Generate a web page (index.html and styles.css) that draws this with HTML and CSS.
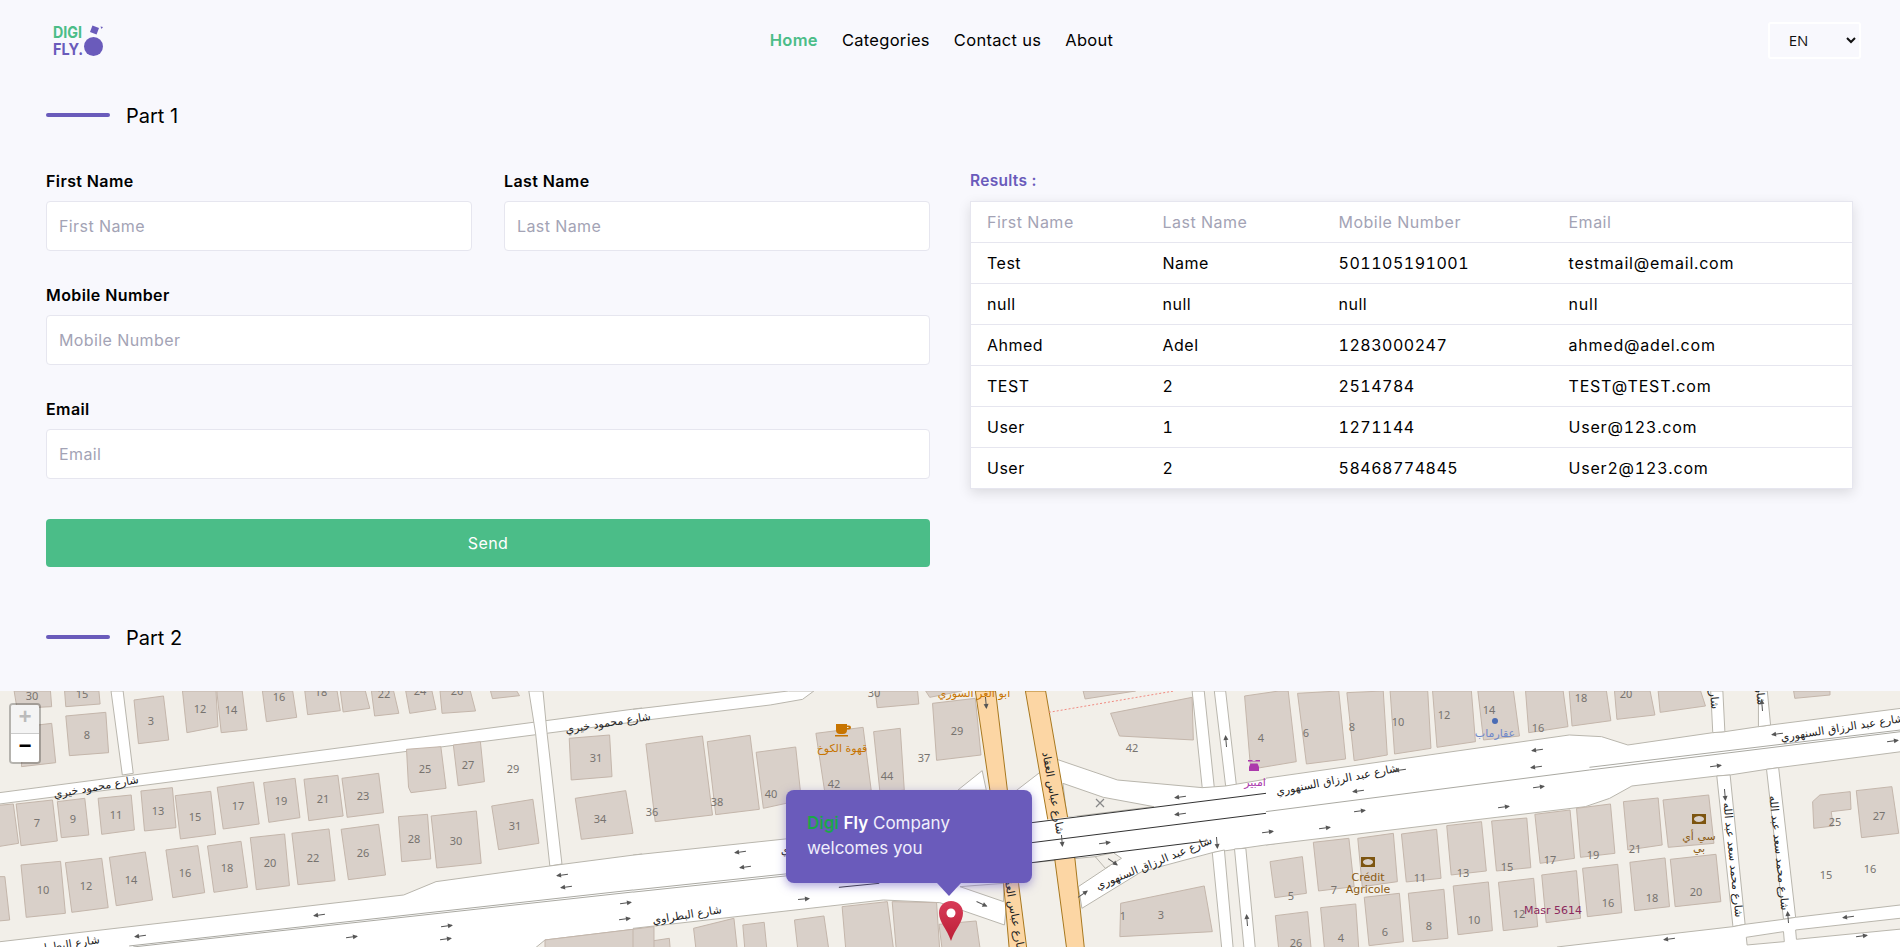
FILE: index.html
```html
<!DOCTYPE html>
<html lang="en">

<head>
    <meta charset="UTF-8">
    <meta name="viewport" content="width=device-width, initial-scale=1.0">
    <title>Digi Fly</title>
    <link rel="stylesheet" href="styles.css">
</head>

<body>
    <header class="site-header">
        <svg class="logo" width="50" height="32" viewBox="0 0 50 32">
            <text class="logo-digi" x="0" y="13" textLength="29" lengthAdjust="spacingAndGlyphs">DIGI</text>
            <text class="logo-fly" x="0" y="30" textLength="30" lengthAdjust="spacingAndGlyphs">FLY.</text>
            <circle cx="40.5" cy="21.5" r="9.5" fill="#6a5bbb" />
            <rect x="38" y="1.500" width="7" height="7" fill="#6a5bbb" transform="rotate(20 41.500 5)" />
            <path d="M47.500 1.500l2.500 .5-1.500 2z" fill="#6a5bbb" />
        </svg>
        <nav class="main-nav">
            <a class="active" href="#">Home</a>
            <a href="#">Categories</a>
            <a href="#">Contact us</a>
            <a href="#">About</a>
        </nav>
        <select class="lang-select">
            <option>EN</option>
            <option>AR</option>
        </select>
    </header>

    <main class="content">
        <h2 class="part-title"><span>Part 1</span></h2>
        <div class="part-one">
            <form class="contact-form">
                <div class="form-row">
                    <div class="field">
                        <label>First Name</label>
                        <input type="text" placeholder="First Name">
                    </div>
                    <div class="field">
                        <label>Last Name</label>
                        <input type="text" placeholder="Last Name">
                    </div>
                </div>
                <div class="field">
                    <label>Mobile Number</label>
                    <input type="text" placeholder="Mobile Number">
                </div>
                <div class="field">
                    <label>Email</label>
                    <input type="text" placeholder="Email">
                </div>
                <button type="button" class="send-btn">Send</button>
            </form>
            <div class="results">
                <div class="results-title">Results :</div>
                <table class="results-table">
                    <thead>
                        <tr>
                            <th>First Name</th>
                            <th>Last Name</th>
                            <th>Mobile Number</th>
                            <th>Email</th>
                        </tr>
                    </thead>
                    <tbody>
                        <tr><td>Test</td><td>Name</td><td>501105191001</td><td>testmail@email.com</td></tr>
                        <tr><td>null</td><td>null</td><td>null</td><td>null</td></tr>
                        <tr><td>Ahmed</td><td>Adel</td><td>1283000247</td><td>ahmed@adel.com</td></tr>
                        <tr><td>TEST</td><td>2</td><td>2514784</td><td>TEST@TEST.com</td></tr>
                        <tr><td>User</td><td>1</td><td>1271144</td><td>User@123.com</td></tr>
                        <tr><td>User</td><td>2</td><td>58468774845</td><td>User2@123.com</td></tr>
                    </tbody>
                </table>
            </div>
        </div>
        <h2 class="part-title part-two"><span>Part 2</span></h2>
    </main>

    <section class="map">
        <svg class="map-canvas" width="1900" height="257" viewBox="0 0 1900 257">
            <defs>
                <g id="arrow">
                    <path d="M-6 0H5" stroke="#555" stroke-width="1" fill="none" />
                    <path d="M6 0L1-2.5V2.5z" fill="#555" />
                </g>
                <clipPath id="clip-right-of-origin">
                    <rect x="0" y="0" width="3000" height="1000" />
                </clipPath>
            </defs>

            <!-- left part -->
            <g transform="translate(0,-10) scale(.4037,.3333)">
                <polygon class="road" points="-20,341 1590,84 1590,123 -20,375" />
                <polygon class="road" points="275,33 305,33 330,280 303,285" />
                <polygon class="road" points="1310,33 1345,33 1355,158 1392,552 1362,558 1327,163" />
                <polygon class="road" points="-20,788 1000,645 1080,605 1362,558 1590,522 1590,745 1350,780 1280,850 -20,850" />
                <polyline class="line" points="320,798 1590,627" />
                <polyline class="line" points="330,801 1590,633" />
                <g class="bldgs">
                    <polygon points="35,33 125,33 128,80 42,85" />
                    <polygon points="160,33 245,33 248,72 163,80" />
                    <polygon points="60,140 128,130 138,248 53,260" />
                    <polygon points="163,108 262,97 269,218 172,227" />
                    <polygon points="332,60 405,48 418,180 343,191" />
                    <polygon points="452,33 535,33 540,140 463,158" />
                    <polygon points="537,33 600,33 612,150 548,158" />
                    <polygon points="650,33 725,33 735,112 660,125" />
                    <polygon points="755,33 835,33 843,92 762,104" />
                    <polygon points="843,33 905,33 916,85 850,96" />
                    <polygon points="920,33 975,33 988,100 928,108" />
                    <polygon points="1005,33 1070,33 1080,88 1015,100" />
                    <polygon points="1090,33 1165,33 1178,93 1095,100" />
                    <polygon points="1215,33 1280,33 1287,47 1220,56" />
                    <polygon points="1007,208 1092,200 1105,325 1018,338 1012,322" />
                    <polygon points="1123,195 1190,185 1200,305 1135,317" />
                    <polygon points="1410,175 1510,165 1516,290 1415,300" />
                    <polygon points="1425,355 1550,332 1568,460 1440,478" />
                    <polygon points="-20,378 33,372 46,490 -20,503" />
                    <polygon points="40,372 130,360 142,483 52,497" />
                    <polygon points="142,365 210,355 220,465 152,473" />
                    <polygon points="243,355 325,345 333,450 252,463" />
                    <polygon points="349,333 427,323 436,443 358,453" />
                    <polygon points="434,347 522,334 534,463 447,477" />
                    <polygon points="538,322 628,306 642,432 553,447" />
                    <polygon points="653,308 731,295 743,413 666,427" />
                    <polygon points="753,298 837,286 850,408 765,422" />
                    <polygon points="847,295 938,280 950,398 860,412" />
                    <polygon points="987,410 1059,403 1067,537 995,545" />
                    <polygon points="1068,408 1180,393 1192,550 1082,564" />
                    <polygon points="1218,378 1320,358 1335,490 1235,509" />
                    <polygon points="52,555 150,544 162,700 65,712" />
                    <polygon points="162,548 252,535 268,683 178,697" />
                    <polygon points="271,532 360,516 378,660 288,677" />
                    <polygon points="411,510 490,497 507,638 428,653" />
                    <polygon points="514,498 597,484 613,622 530,637" />
                    <polygon points="620,473 705,462 717,617 635,629" />
                    <polygon points="723,460 815,447 830,602 738,614" />
                    <polygon points="845,448 938,433 955,585 863,599" />
                    <polygon points="-20,590 12,590 24,720 -20,725" />
                </g>
            </g>

            <!-- middle part -->
            <g transform="translate(633,-10) scale(.4037,.3333)" clip-path="url(#clip-right-of-origin)">
                <polygon class="road" points="-20,91 385,33 448,33 420,58 340,75 -20,128" />
                <polygon class="road" points="1385,33 1415,33 1440,323 1410,323" />
                <polygon class="road" points="1440,33 1468,33 1495,320 1468,318" />
                <polygon class="road" points="805,330 865,272 875,330" />
                <polygon class="road" points="-20,528 860,415 1050,238 1200,300 1410,323 1468,318 1590,293 1590,491 1435,518 1260,575 1112,685 1103,620 1180,558 1145,530 988,548 935,560 920,735 760,668 620,660 -20,748" />
                <polygon class="road" points="1435,518 1465,510 1490,850 1462,850" />
                <polygon class="road" points="1490,507 1518,505 1545,850 1517,850" />
                <polygon class="land" points="1065,310 1165,352 1290,380 1075,412" />
                <polygon class="land" points="810,620 918,665 918,610" />
                <polygon class="land" points="1145,530 1170,565 1210,535 1190,518" />
                <polygon class="motorway" points="848,33 898,33 955,610 980,850 935,850 918,610" />
                <polygon class="motorway" points="972,33 1022,33 1095,540 1122,850 1079,850 1045,540" />
                <polygon class="bridge" points="860,443 1100,408 1100,530 860,568" />
                <polyline class="line dark" points="988,428 1568,340" />
                <polyline class="line dark" points="988,488 1568,400" />
                <polyline class="line dark" points="988,548 1420,483" />
                <polyline class="line dark" points="510,622 610,610" />
                <polyline class="line" points="-20,633 860,520" />
                <polyline class="line" points="-20,639 860,526" />
                <polyline class="dotted" points="1030,97 1340,33" />
                <g class="bldgs">
                    <polygon points="600,33 705,33 708,72 605,83" />
                    <polygon points="725,33 815,33 735,52" />
                    <polygon points="742,70 848,55 862,225 752,241" />
                    <polygon points="32,192 172,168 197,405 55,425" />
                    <polygon points="184,185 290,166 313,388 205,404" />
                    <polygon points="305,217 403,201 417,360 323,385" />
                    <polygon points="453,160 570,142 590,330 478,360" />
                    <polygon points="596,155 662,145 672,330 612,340" />
                    <polygon points="1183,100 1385,52 1388,180 1205,168" />
                    <polygon points="1115,33 1245,33 1120,57" />
                    <polygon points="1515,48 1600,33 1623,33 1643,245 1530,268" />
                    <polygon points="400,720 473,708 490,850 412,850" />
                    <polygon points="150,745 250,715 262,850 160,850" />
                    <polygon points="272,735 325,727 335,850 280,850" />
                    <polygon points="518,680 630,665 650,850 530,850" />
                    <polygon points="642,665 752,668 762,850 655,850" />
                    <polygon points="758,733 850,723 865,850 770,850" />
                    <polygon points="25,787 90,775 95,850 28,850" />
                    <polygon points="0,750 14,748 16,850 0,850" />
                    <polygon points="-218,780 52,740 52,850 -218,850" />
                    <polygon points="1208,670 1415,618 1435,755 1206,770" />
                </g>
            </g>
            <g transform="translate(633,-10) scale(.4037,.3333)">
                <polygon class="bldg-solo" points="-218,780 0,748 0,850 -218,850" />
            </g>

            <!-- right part -->
            <g transform="translate(1266,-10) scale(.4043,.3333)" clip-path="url(#clip-right-of-origin)">
                <polygon class="road" points="-20,298 750,165 830,170 895,195 1105,158 1135,155 1218,140 1248,135 1590,82 1590,212 1268,263 1238,268 1148,285 1115,288 905,318 850,355 790,380 -20,498" />
                <polygon class="road" points="1100,33 1130,33 1135,155 1105,158" />
                <polygon class="road" points="1218,33 1240,33 1248,135 1218,140" />
                <polygon class="road" points="1115,288 1148,285 1185,733 1155,740" />
                <polygon class="road" points="1238,268 1268,263 1310,712 1280,718" />
                <polygon class="road" points="720,801 1155,740 1185,733 1280,718 1310,712 1590,672 1590,850 720,850" />
                <polygon class="land" points="1188,772 1280,755 1282,785 1190,795" />
                <polygon class="land" points="1310,750 1590,712 1590,745 1312,778" />
                <polyline class="line" points="-20,398 800,270 1590,152" />
                <polyline class="line" points="800,262 1590,147" />
                <g class="bldgs">
                    <polygon points="78,40 180,33 197,237 100,252" />
                    <polygon points="200,38 290,33 300,225 218,242" />
                    <polygon points="307,33 400,33 408,205 318,222" />
                    <polygon points="412,33 508,33 518,185 423,202" />
                    <polygon points="524,33 612,33 627,168 538,180" />
                    <polygon points="642,33 735,33 747,140 650,158" />
                    <polygon points="750,33 842,33 853,122 757,138" />
                    <polygon points="862,33 950,33 962,105 868,118" />
                    <polygon points="970,33 1075,33 1087,78 975,97" />
                    <polygon points="1305,33 1395,33 1395,45 1308,55" />
                    <polygon points="10,545 90,530 100,640 22,653" />
                    <polygon points="117,487 205,475 218,620 130,633" />
                    <polygon points="227,475 315,460 325,605 238,620" />
                    <polygon points="335,462 422,448 433,595 347,606" />
                    <polygon points="447,437 533,425 545,573 458,585" />
                    <polygon points="558,423 645,414 655,563 570,573" />
                    <polygon points="665,403 752,390 763,535 678,550" />
                    <polygon points="768,385 852,372 863,520 778,532" />
                    <polygon points="884,365 970,354 980,495 895,510" />
                    <polygon points="982,360 1095,345 1108,490 995,502" />
                    <polygon points="23,707 103,695 115,850 35,850" />
                    <polygon points="135,683 222,672 232,850 148,850" />
                    <polygon points="243,652 330,640 340,785 255,797" />
                    <polygon points="352,640 440,628 450,775 363,785" />
                    <polygon points="463,618 550,606 560,752 475,764" />
                    <polygon points="575,607 662,595 672,740 587,752" />
                    <polygon points="682,585 768,572 778,715 693,728" />
                    <polygon points="783,565 870,553 880,698 795,710" />
                    <polygon points="900,547 987,534 998,680 912,692" />
                    <polygon points="1000,538 1113,523 1125,665 1012,680" />
                    <polygon points="1352,365 1370,345 1445,335 1447,388 1398,395 1403,438 1355,445" />
                    <polygon points="1460,332 1548,320 1565,460 1473,473" />
                </g>
            </g>

            <!-- everything below is placed one pixel lower because the canvas starts 1px above the map -->
            <g transform="translate(0,1)">
                <!-- house numbers -->
                <g class="num">
                    <text x="32" y="4">30</text><text x="82" y="2">15</text><text x="87" y="43">8</text><text x="151" y="29">3</text>
                    <text x="200" y="17">12</text><text x="231" y="18">14</text><text x="279" y="5">16</text><text x="321" y="0">18</text>
                    <text x="384" y="2">22</text><text x="420" y="-1">24</text><text x="457" y="-1">26</text><text x="425" y="77">25</text>
                    <text x="468" y="73">27</text><text x="513" y="77">29</text><text x="596" y="66">31</text><text x="37" y="131">7</text>
                    <text x="73" y="127">9</text><text x="116" y="123">11</text><text x="158" y="119">13</text><text x="195" y="125">15</text>
                    <text x="238" y="114">17</text><text x="281" y="109">19</text><text x="323" y="107">21</text><text x="363" y="104">23</text>
                    <text x="414" y="147">28</text><text x="456" y="149">30</text><text x="515" y="134">31</text><text x="600" y="127">34</text>
                    <text x="43" y="198">10</text><text x="86" y="194">12</text><text x="131" y="188">14</text><text x="185" y="181">16</text>
                    <text x="227" y="176">18</text><text x="270" y="171">20</text><text x="313" y="166">22</text><text x="363" y="161">26</text>
                    <text x="957" y="39">29</text><text x="924" y="66">37</text><text x="1132" y="56">42</text><text x="1261" y="46">4</text>
                    <text x="652" y="120">36</text><text x="717" y="110">38</text><text x="771" y="102">40</text><text x="834" y="92">42</text>
                    <text x="887" y="84">44</text><text x="1123" y="224">1</text><text x="1161" y="223">3</text><text x="874" y="1">30</text>
                    <text x="1489" y="18">14</text><text x="1306" y="41">6</text><text x="1352" y="35">8</text><text x="1398" y="30">10</text>
                    <text x="1444" y="23">12</text><text x="1538" y="36">16</text><text x="1581" y="6">18</text><text x="1626" y="2">20</text>
                    <text x="1291" y="204">5</text><text x="1334" y="198">7</text><text x="1420" y="186">11</text><text x="1463" y="181">13</text>
                    <text x="1507" y="175">15</text><text x="1550" y="168">17</text><text x="1593" y="163">19</text><text x="1635" y="157">21</text>
                    <text x="1296" y="251">26</text><text x="1341" y="246">4</text><text x="1385" y="240">6</text><text x="1429" y="234">8</text>
                    <text x="1474" y="228">10</text><text x="1519" y="222">12</text><text x="1608" y="211">16</text><text x="1652" y="206">18</text>
                    <text x="1696" y="200">20</text><text x="1835" y="130">25</text><text x="1879" y="124">27</text><text x="1826" y="183">15</text>
                    <text x="1870" y="177">16</text>
                </g>

                <!-- street names -->
                <g class="street">
                    <text transform="translate(96,96) rotate(-10)">شارع محمود خيري</text>
                    <text transform="translate(608,32) rotate(-9)">شارع محمود خيري</text>
                    <text transform="translate(65,254) rotate(-9)">شارع البطراوي</text>
                    <text transform="translate(815,155) rotate(-8)">شارع البطراوي</text>
                    <text transform="translate(687,224) rotate(-9)">شارع البطراوي</text>
                    <text transform="translate(1053,102) rotate(80)">شارع عباس العقاد</text>
                    <text transform="translate(1014,222) rotate(80)">شارع عباس العقاد</text>
                    <text transform="translate(1154,172) rotate(-22)">شارع عبد الرزاق السنهوري</text>
                    <text transform="translate(1337,89) rotate(-11)">شارع عبد الرزاق السنهوري</text>
                    <text transform="translate(1842,37) rotate(-9)">شارع عبد الرزاق السنهوري</text>
                    <text transform="translate(1733,169) rotate(84)">شارع محمد سعد عبد الله</text>
                    <text transform="translate(1779,162) rotate(84)">شارع محمد سعد عبد الله</text>
                    <text transform="translate(1714,6) rotate(84)">شارع</text>
                    <text transform="translate(1760,2) rotate(84)">شارع</text>
                </g>

                <!-- places -->
                <text class="poi cafe" x="974" y="2">ابو الغر السوري</text>
                <text class="poi cafe" x="842" y="57">قهوة الكوخ</text>
                <text class="poi car" x="1255" y="91">امبير</text>
                <text class="poi estate" x="1495" y="42">عقارماب</text>
                <text class="poi bank" x="1368" y="186">Crédit</text>
                <text class="poi bank" x="1368" y="198">Agricole</text>
                <text class="poi bank" x="1699" y="145">سي أي</text>
                <text class="poi bank" x="1699" y="157">بي</text>
                <text class="poi masr" x="1553" y="219">Masr 5614</text>

                <circle cx="1495" cy="30" r="3" fill="#4a6cb5" />
                <path d="M836 33h11v6a4 4 0 0 1-4 4h-3a4 4 0 0 1-4-4zM847 34.500h2a1.500 1.500 0 0 1 0 4h-2v-1.500h1.500v-1h-1.500zM835 44h13v1.500h-13z" fill="#c77400" />
                <path d="M1248 69h4l1 1h2l1-1h4v1.500h-12zM1249 76l1.500-3.500h7l1.500 3.500v4h-10z" fill="#ac39ac" />
                <g fill="#7d5510">
                    <path d="M1361 166h14v10h-14zM1368 168a5 3 0 1 0 .01 0z" fill-rule="evenodd" />
                    <path d="M1692 123h14v10h-14zM1699 125a5 3 0 1 0 .01 0z" fill-rule="evenodd" />
                </g>
                <path d="M1096 108l8 8M1104 108l-8 8" stroke="#888" stroke-width="1.200" />

                <!-- one way arrows -->
                <use href="#arrow" transform="translate(562,184) rotate(172)" />
                <use href="#arrow" transform="translate(566,196) rotate(172)" />
                <use href="#arrow" transform="translate(319,224) rotate(172)" />
                <use href="#arrow" transform="translate(140,245) rotate(172)" />
                <use href="#arrow" transform="translate(447,235) rotate(-8)" />
                <use href="#arrow" transform="translate(446,248) rotate(-8)" />
                <use href="#arrow" transform="translate(352,246) rotate(-8)" />
                <use href="#arrow" transform="translate(626,212) rotate(-8)" />
                <use href="#arrow" transform="translate(625,228) rotate(-8)" />
                <use href="#arrow" transform="translate(740,161) rotate(172)" />
                <use href="#arrow" transform="translate(745,176) rotate(172)" />
                <use href="#arrow" transform="translate(1180,106) rotate(172)" />
                <use href="#arrow" transform="translate(1180,123) rotate(172)" />
                <use href="#arrow" transform="translate(804,208) rotate(-5)" />
                <use href="#arrow" transform="translate(982,213) rotate(25)" />
                <use href="#arrow" transform="translate(1105,152) rotate(-8)" />
                <use href="#arrow" transform="translate(1113,171) rotate(35)" />
                <use href="#arrow" transform="translate(1083,203) rotate(-35)" />
                <use href="#arrow" transform="translate(986,12) rotate(85)" />
                <use href="#arrow" transform="translate(1062,150) rotate(85)" />
                <use href="#arrow" transform="translate(1226,50) rotate(-95)" />
                <use href="#arrow" transform="translate(1217,152) rotate(85)" />
                <use href="#arrow" transform="translate(1247,229) rotate(-95)" />
                <use href="#arrow" transform="translate(1537,59) rotate(172)" />
                <use href="#arrow" transform="translate(1536,76) rotate(172)" />
                <use href="#arrow" transform="translate(1400,79) rotate(172)" />
                <use href="#arrow" transform="translate(1358,100) rotate(172)" />
                <use href="#arrow" transform="translate(1777,43) rotate(172)" />
                <use href="#arrow" transform="translate(1848,226) rotate(172)" />
                <use href="#arrow" transform="translate(1669,248) rotate(172)" />
                <use href="#arrow" transform="translate(1360,120) rotate(-8)" />
                <use href="#arrow" transform="translate(1539,96) rotate(-8)" />
                <use href="#arrow" transform="translate(1504,116) rotate(-8)" />
                <use href="#arrow" transform="translate(1325,137) rotate(-8)" />
                <use href="#arrow" transform="translate(1716,75) rotate(-8)" />
                <use href="#arrow" transform="translate(1893,50) rotate(-8)" />
                <use href="#arrow" transform="translate(1862,245) rotate(-8)" />
                <use href="#arrow" transform="translate(1268,141) rotate(-8)" />
                <use href="#arrow" transform="translate(1762,14) rotate(-95)" />
                <use href="#arrow" transform="translate(1725,104) rotate(85)" />
                <use href="#arrow" transform="translate(1788,226) rotate(-95)" />
            </g>
        </svg>

        <div class="zoom-ctrl">
            <button type="button" class="zoom-btn disabled">+</button>
            <button type="button" class="zoom-btn">&minus;</button>
        </div>

        <div class="map-popup">
            <span class="digi">Digi</span> <b>Fly</b> Company<br>welcomes you
        </div>

        <svg class="map-pin" width="24" height="40" viewBox="0 0 24 40">
            <defs>
                <linearGradient id="pin-fill" x1="0" y1="0" x2="0" y2="1">
                    <stop offset="0" stop-color="#d83b58" />
                    <stop offset="1" stop-color="#bb1f36" />
                </linearGradient>
            </defs>
            <path d="M12 0C5 0 0 5 0 12c0 9 8 16 12 28 4-12 12-19 12-28C24 5 19 0 12 0z" fill="url(#pin-fill)" />
            <circle cx="12" cy="12" r="4.500" fill="#fff" />
        </svg>
    </section>
</body>

</html>
```

FILE: styles.css
```css
html,
body {
    margin: 0;
    padding: 0;
    overflow: hidden;
}

body {
    font-family: Inter, "Noto Sans", sans-serif;
    background-color: #f8f8fd;
    color: #000;
}

.site-header {
    height: 80px;
    padding: 0 39px 0 53px;
    display: flex;
    align-items: center;
    justify-content: space-between;
}

.logo {
    overflow: visible;
    margin-top: 2px;
}

.logo-digi,
.logo-fly {
    font-size: 16px;
    font-weight: 700;
}

.logo-digi {
    fill: #4bbd88;
}

.logo-fly {
    fill: #6a5bbb;
}

.main-nav {
    display: flex;
    gap: 24px;
    margin-left: 12px;
}

.main-nav a {
    color: #000;
    font-size: 16.500px;
    letter-spacing: .3px;
    text-decoration: none;
}

.main-nav a.active {
    color: #4bbd88;
    font-weight: 600;
}

.lang-select {
    width: 93px;
    height: 37px;
    padding: 0 28px 0 8px;
    border: 2px solid #fff;
    border-radius: 3px;
    background-color: #f8f8fd;
    font-family: "Open Sans", sans-serif;
    font-size: 15px;
    text-align: center;
    color: #111;
}

.content {
    padding: 0 47px 0 46px;
}

.part-title {
    margin: 20px 0 39px;
    display: flex;
    align-items: center;
    gap: 16px;
    height: 30px;
    font-size: 20px;
    font-weight: 400;
}

.part-title span {
    margin-top: 2px;
}

.part-title::before {
    content: "";
    width: 64px;
    height: 4px;
    border-radius: 2px;
    background-color: #6a5bbb;
}

.part-two {
    margin: 55px 0 39px;
}

.part-one {
    display: grid;
    grid-template-columns: 884px 1fr;
    gap: 40px;
}

.form-row {
    display: grid;
    grid-template-columns: 1fr 1fr;
    gap: 32px;
}

.field {
    margin-bottom: 32px;
}

.field label {
    display: block;
    height: 22px;
    margin-bottom: 10px;
    font-size: 16px;
    line-height: 24px;
    font-weight: 600;
    letter-spacing: .4px;
}

.field input {
    display: block;
    box-sizing: border-box;
    width: 100%;
    height: 50px;
    padding: 0 12px;
    border: 1px solid #e6e6ef;
    border-radius: 4px;
    background-color: #fff;
    font-family: inherit;
    font-size: 16px;
    letter-spacing: .4px;
}

.field input::placeholder {
    color: #a3a3b5;
}

.send-btn {
    display: block;
    width: 100%;
    height: 48px;
    margin-top: 40px;
    border: none;
    border-radius: 4px;
    background-color: #4bbd88;
    color: #fff;
    font-family: inherit;
    font-size: 16px;
    letter-spacing: .4px;
}

.results-title {
    height: 22px;
    margin-bottom: 10px;
    color: #6a5bbb;
    font-size: 15.500px;
    line-height: 24px;
    font-weight: 600;
    letter-spacing: .3px;
}

.results-table {
    width: 100%;
    table-layout: fixed;
    border-collapse: collapse;
    border: 1px solid #e6e6ef;
    background-color: #fff;
    box-shadow: 0 4px 12px rgba(0, 0, 0, .12);
}

.results-table th,
.results-table td {
    height: 41px;
    box-sizing: border-box;
    padding: 0 0 0 16px;
    border-bottom: 1px solid #e6e6ef;
    text-align: left;
    font-size: 16px;
    letter-spacing: .5px;
    font-variant-numeric: tabular-nums;
}

.results-table td:nth-child(4) {
    letter-spacing: .8px;
}

.results-table th {
    color: #a3a3b5;
    font-weight: 400;
}

.results-table th:nth-child(1),
.results-table th:nth-child(2) {
    width: 176px;
}

.results-table th:nth-child(3) {
    width: 230px;
}

.map {
    position: relative;
    height: 256px;
    overflow: hidden;
    background-color: #f2efe9;
}

.map-canvas {
    display: block;
    margin-top: -1px;
}

.road,
.bridge {
    fill: #fff;
    stroke: #b9b6ad;
    stroke-width: 1;
    vector-effect: non-scaling-stroke;
}

.bridge {
    stroke: none;
}

.land {
    fill: #f2efe9;
    stroke: #b9b6ad;
    stroke-width: 1;
    vector-effect: non-scaling-stroke;
}

.motorway {
    fill: #fcd6a4;
    stroke: #a8781e;
    stroke-width: 1;
    vector-effect: non-scaling-stroke;
}

.line {
    fill: none;
    stroke: #aaa9a2;
    stroke-width: 1;
    vector-effect: non-scaling-stroke;
}

.line.dark {
    stroke: #333;
}

.dotted {
    fill: none;
    stroke: #f08a80;
    stroke-width: 1;
    stroke-dasharray: 2 2;
    vector-effect: non-scaling-stroke;
}

.bldgs polygon,
.bldg-solo {
    fill: #d9d0c9;
    stroke: #c4b6ab;
    stroke-width: 1;
    vector-effect: non-scaling-stroke;
}

.num text {
    fill: #77736f;
    font-family: "Noto Sans", "DejaVu Sans", sans-serif;
    font-size: 11px;
    text-anchor: middle;
    dominant-baseline: central;
}

.street text {
    fill: #222;
    font-family: "DejaVu Sans", sans-serif;
    font-size: 11px;
    text-anchor: middle;
    dominant-baseline: central;
}

.poi {
    font-family: "DejaVu Sans", sans-serif;
    font-size: 11px;
    text-anchor: middle;
    dominant-baseline: central;
}

.cafe {
    fill: #c77400;
}

.car {
    fill: #ac39ac;
}

.estate {
    fill: #6d87c9;
}

.bank {
    fill: #8a5a13;
}

.masr {
    fill: #8c2a5e;
}

.zoom-ctrl {
    position: absolute;
    top: 12px;
    left: 9px;
    width: 28px;
    border: 2px solid rgba(0, 0, 0, .25);
    border-radius: 4px;
    overflow: hidden;
}

.zoom-btn {
    display: block;
    width: 28px;
    height: 28px;
    padding: 0;
    border: none;
    background-color: #fff;
    font-family: "Lucida Console", "Liberation Mono", monospace;
    font-size: 22px;
    font-weight: 700;
    line-height: 28px;
    color: #000;
}

.zoom-btn.disabled {
    height: 29px;
    border-bottom: 1px solid #ccc;
    background-color: #f4f4f4;
    color: #bbb;
}

.map-popup {
    position: absolute;
    top: 99px;
    left: 786px;
    box-sizing: border-box;
    width: 246px;
    height: 93px;
    padding: 21px 21px 0;
    border-radius: 8px;
    background-color: #6a5bbb;
    box-shadow: 0 3px 10px rgba(106, 91, 187, .55);
    color: #f0eefc;
    font-size: 17px;
    line-height: 25px;
}

.map-popup b {
    color: #fff;
    font-weight: 600;
}

.map-popup .digi {
    color: #1ca64a;
    font-weight: 600;
}

.map-popup::after {
    content: "";
    position: absolute;
    top: 93px;
    left: 151px;
    border-top: 13px solid #6a5bbb;
    border-left: 12px solid transparent;
    border-right: 12px solid transparent;
}

.map-pin {
    position: absolute;
    top: 210px;
    left: 939px;
}
```
